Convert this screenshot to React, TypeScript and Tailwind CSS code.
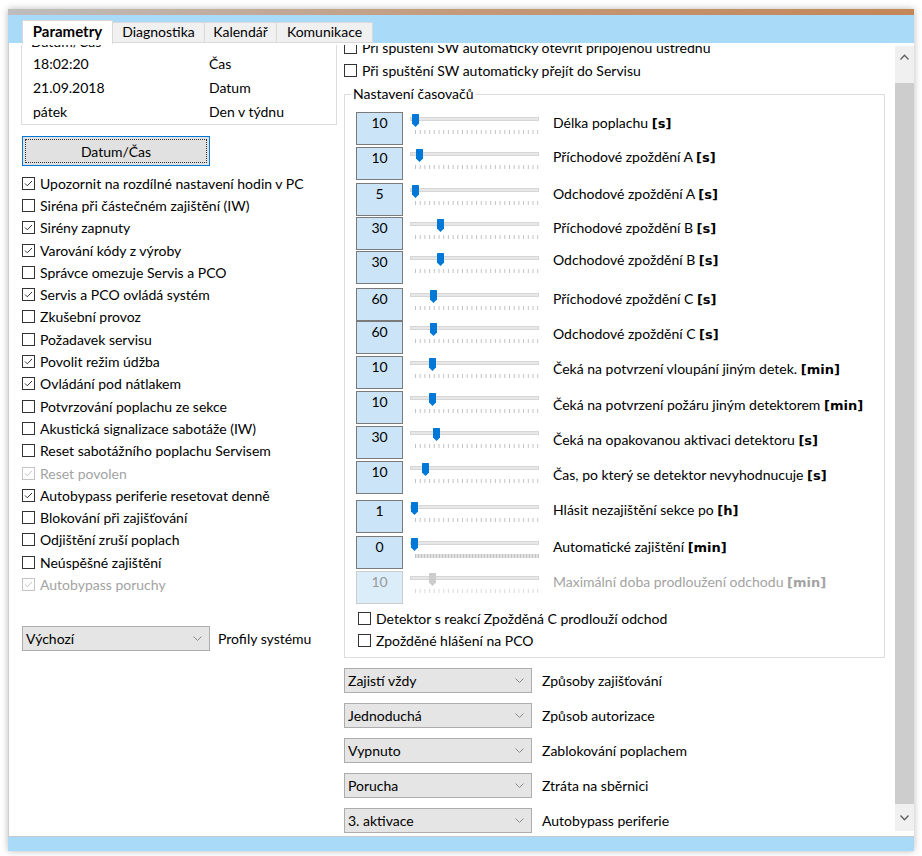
import React from "react";

type Opt = { label: string; checked?: boolean; disabled?: boolean };

const leftChecks: Opt[] = [
  { label: "Upozornit na rozdílné nastavení hodin v PC", checked: true },
  { label: "Siréna při částečném zajištění (IW)" },
  { label: "Sirény zapnuty", checked: true },
  { label: "Varování kódy z výroby", checked: true },
  { label: "Správce omezuje Servis a PCO" },
  { label: "Servis a PCO ovládá systém", checked: true },
  { label: "Zkušební provoz" },
  { label: "Požadavek servisu" },
  { label: "Povolit režim údžba", checked: true },
  { label: "Ovládání pod nátlakem", checked: true },
  { label: "Potvrzování poplachu ze sekce" },
  { label: "Akustická signalizace sabotáže (IW)" },
  { label: "Reset sabotážního poplachu Servisem" },
  { label: "Reset povolen", checked: true, disabled: true },
  { label: "Autobypass periferie resetovat denně", checked: true },
  { label: "Blokování při zajišťování" },
  { label: "Odjištění zruší poplach" },
  { label: "Neúspěšné zajištění" },
  { label: "Autobypass poruchy", checked: true, disabled: true },
];

type Timer = {
  value: string;
  label: string;
  unit: string;
  pos: number;
  h: string;
  lt: string;
  dense?: boolean;
  disabled?: boolean;
};

// h = row height, lt = label offset in the row
const timers: Timer[] = [
  { value: "10", label: "Délka poplachu", unit: "[s]", pos: 2, h: "h-[35px]", lt: "mt-[1px]" },
  { value: "10", label: "Příchodové zpoždění A", unit: "[s]", pos: 6, h: "h-[36px]", lt: "mt-0" },
  { value: "5", label: "Odchodové zpoždění A", unit: "[s]", pos: 2, h: "h-[34px]", lt: "mt-[1px]" },
  { value: "30", label: "Příchodové zpoždění B", unit: "[s]", pos: 27, h: "h-[34px]", lt: "mt-[1px]" },
  { value: "30", label: "Odchodové zpoždění B", unit: "[s]", pos: 27, h: "h-[37px]", lt: "-mt-[1px]" },
  { value: "60", label: "Příchodové zpoždění C", unit: "[s]", pos: 20, h: "h-[33px]", lt: "mt-[1px]" },
  { value: "60", label: "Odchodové zpoždění C", unit: "[s]", pos: 20, h: "h-[35px]", lt: "mt-[3px]" },
  { value: "10", label: "Čeká na potvrzení vloupání jiným detek.", unit: "[min]", pos: 19, h: "h-[35px]", lt: "mt-[3px]" },
  { value: "10", label: "Čeká na potvrzení požáru jiným detektorem", unit: "[min]", pos: 19, h: "h-[35px]", lt: "mt-[4px]" },
  { value: "30", label: "Čeká na opakovanou aktivaci detektoru", unit: "[s]", pos: 23, h: "h-[35px]", lt: "mt-[4px]" },
  { value: "10", label: "Čas, po který se detektor nevyhodnucuje", unit: "[s]", pos: 12, h: "h-[39px]", lt: "mt-[4px]" },
  { value: "1", label: "Hlásit nezajištění sekce po", unit: "[h]", pos: 1, h: "h-[36px]", lt: "mt-0" },
  { value: "0", label: "Automatické zajištění", unit: "[min]", pos: 1, h: "h-[35px]", lt: "mt-[1px]", dense: true },
  { value: "10", label: "Maximální doba prodloužení odchodu", unit: "[min]", pos: 19, h: "h-[33px]", lt: "mt-[1px]", disabled: true },
];

const selects = [
  { value: "Zajistí vždy", label: "Způsoby zajišťování" },
  { value: "Jednoduchá", label: "Způsob autorizace" },
  { value: "Vypnuto", label: "Zablokování poplachem" },
  { value: "Porucha", label: "Ztráta na sběrnici" },
  { value: "3. aktivace", label: "Autobypass periferie" },
];

function CheckBox({ label, checked, disabled, h = "h-[22.3px]" }: Opt & { h?: string }) {
  const c = disabled ? "#c4c4c4" : "#333333";
  return (
    <div className={`flex items-center ${h}`}>
      <span
        className={`w-[13px] h-[13px] shrink-0 border bg-white flex items-center justify-center ${
          disabled ? "border-[#c4c4c4]" : "border-[#333333]"
        }`}
      >
        {checked && (
          <svg width="11" height="11" viewBox="0 0 11 11">
            <path d="M2 5.5 L4.3 7.8 L9 3" fill="none" stroke={c} strokeWidth="1" />
          </svg>
        )}
      </span>
      <span className={`ml-[5px] whitespace-nowrap ${disabled ? "text-[#a3a3a3]" : "text-black"}`}>{label}</span>
    </div>
  );
}

function Chevron({ up, down }: { up?: boolean; down?: boolean }) {
  if (up)
    return (
      <svg width="9" height="6" viewBox="0 0 9 6">
        <path d="M0.5 5.5 L4.5 1.2 L8.5 5.5" fill="none" stroke="#606060" strokeWidth="1.3" />
      </svg>
    );
  if (down)
    return (
      <svg width="9" height="6" viewBox="0 0 9 6">
        <path d="M0.5 0.5 L4.5 4.8 L8.5 0.5" fill="none" stroke="#606060" strokeWidth="1.3" />
      </svg>
    );
  return (
    <svg width="9" height="5" viewBox="0 0 9 5">
      <path d="M0.5 0.5 L4.5 4.5 L8.5 0.5" fill="none" stroke="#8a8a8a" strokeWidth="1" />
    </svg>
  );
}

function Select({ value, label }: { value: string; label: string }) {
  return (
    <div className="flex items-center h-[25px]">
      <div className="w-[188px] h-[25px] bg-[#e5e5e5] border border-[#adadad] flex items-center justify-between pl-[3px] pr-[7px]">
        <span>{value}</span>
        <Chevron />
      </div>
      <span className="ml-[10px] whitespace-nowrap">{label}</span>
    </div>
  );
}

function Slider({ pos, dense, disabled }: { pos: number; dense?: boolean; disabled?: boolean }) {
  const n = dense ? 83 : 27;
  const step = dense ? 1.5 : 4.7;
  return (
    <div className="relative w-[129px] h-[22px] shrink-0">
      <div className="absolute left-0 right-0 top-[3px] h-[4px] bg-[#e7e7e7] border border-[#d6d6d6]" />
      <svg className="absolute left-0 top-[16px]" width="129" height="5" viewBox="0 0 129 5">
        {Array.from({ length: n }).map((_, i) => (
          <line
            key={i}
            x1={5.5 + i * step}
            x2={5.5 + i * step}
            y1="0"
            y2="4"
            stroke={disabled ? "#d0d0d0" : "#b4b4b4"}
            strokeWidth="0.8"
          />
        ))}
      </svg>
      <svg className="absolute top-0" style={{ left: pos }} width="7" height="13" viewBox="0 0 7 13">
        <path d="M0 0.5 Q0 0 0.5 0 H6.5 Q7 0 7 0.5 V9.5 L3.5 13 L0 9.5 Z" fill={disabled ? "#cccccc" : "#0078d7"} />
      </svg>
    </div>
  );
}

function TimerRow({ t }: { t: Timer }) {
  return (
    <div className={`flex items-start ${t.h}`}>
      <div
        className={`w-[47px] h-[33px] shrink-0 border text-center leading-5 ${
          t.disabled ? "bg-[#dcedfa] border-[#cccccc] text-[#999999]" : "bg-[#cce4f7] border-[#7a7a7a] text-black"
        }`}
      >
        {t.value}
      </div>
      <div className="ml-[7px] mt-[2px]">
        <Slider pos={t.pos} dense={t.dense} disabled={t.disabled} />
      </div>
      <div className={`ml-[14px] ${t.lt} leading-5 whitespace-nowrap ${t.disabled ? "text-[#a3a3a3]" : "text-black"}`}>
        {t.label}{" "}
        <span className="font-['DejaVu_Sans',sans-serif] font-bold text-[13px]">{t.unit}</span>
      </div>
    </div>
  );
}

const tabs = ["Parametry", "Diagnostika", "Kalendář", "Komunikace"];
const tabW = ["w-[91px]", "w-[92px]", "w-[72px]", "w-[96px]"];

export default function App() {
  return (
    <div className="w-[922px] h-[856px] bg-white pt-[9px] pl-[8px] font-['Lato',sans-serif] text-[14px] text-black">
      <div className="w-[906px] h-[842px] flex flex-col bg-white shadow-[0_0_7px_rgba(0,0,0,0.28)]">
        {/* title edge */}
        <div className="h-[6px] bg-gradient-to-r from-[#bdbdbd] via-[#c39a7a] to-[#c38657]" />

        {/* tab strip */}
        <div className="h-[28px] bg-[#a9dbf8] flex items-end pl-[14px]">
          {tabs.map((t, i) =>
            i === 0 ? (
              <div
                key={t}
                className={`${tabW[i]} h-[24px] -mb-px pb-[3px] bg-white border border-b-0 border-[#d9d9d9] flex items-center justify-center font-bold text-[15px] z-10`}
              >
                {t}
              </div>
            ) : (
              <div
                key={t}
                className={`${tabW[i]} h-[21px] pb-[2px] bg-[#f0f0f0] border border-l-0 border-[#d9d9d9] flex items-center justify-center`}
              >
                {t}
              </div>
            )
          )}
        </div>

        {/* body */}
        <div className="h-[793px] flex border-l border-[#cfcfcf] pt-[2px]">
          <div className="flex-1 overflow-hidden">
            <div className="-mt-[15px] flex">
              {/* left column */}
              <div className="ml-[12px] w-[316px] flex flex-col">
                <div className="relative mt-[12px] h-[83px] border border-[#dcdcdc] pt-[8px] pl-[11px]">
                  <span className="absolute -top-[11px] left-[8px] px-[1px] bg-white leading-5">Datum/Čas</span>
                  {[
                    ["18:02:20", "Čas"],
                    ["21.09.2018", "Datum"],
                    ["pátek", "Den v týdnu"],
                  ].map(([a, b]) => (
                    <div key={a} className="flex items-center h-6">
                      <span className="w-[176px]">{a}</span>
                      <span>{b}</span>
                    </div>
                  ))}
                </div>

                <div className="mt-[11px] ml-[1px] w-[188px] h-[30px] bg-[#e1e1e1] border border-[#0078d7] p-[2px]">
                  <div className="w-full h-full border border-dotted border-[#333333] flex items-center justify-center">
                    Datum/Čas
                  </div>
                </div>

                <div className="mt-[6px] ml-[1px] flex flex-col">
                  {leftChecks.map((c) => (
                    <CheckBox key={c.label} {...c} />
                  ))}
                </div>

                <div className="mt-[30px] ml-[1px] flex items-center h-[25px]">
                  <div className="w-[188px] h-[25px] bg-[#e5e5e5] border border-[#adadad] flex items-center justify-between pl-[3px] pr-[7px]">
                    <span>Výchozí</span>
                    <Chevron />
                  </div>
                  <span className="ml-[8px] whitespace-nowrap">Profily systému</span>
                </div>
              </div>

              {/* right column */}
              <div className="ml-[7px] w-[541px] flex flex-col pt-[6px]">
                <CheckBox h="h-[23px]" label="Při spuštění SW automaticky otevřít připojenou ústřednu" />
                <CheckBox h="h-[23px]" label="Při spuštění SW automaticky přejít do Servisu" />

                <div className="relative mt-[12px] border border-[#dcdcdc] pl-[11px] pt-[17px] pb-[6px]">
                  <span className="absolute -top-[11px] left-[6px] px-[2px] bg-white leading-5">Nastavení časovačů</span>
                  {timers.map((t) => (
                    <TimerRow key={t.label} t={t} />
                  ))}
                  <div className="mt-[3px] ml-[2px]">
                    <CheckBox h="h-[22px]" label="Detektor s reakcí Zpožděná C prodlouží odchod" />
                    <CheckBox h="h-[22px]" label="Zpožděné hlášení na PCO" />
                  </div>
                </div>

                <div className="mt-[10px] flex flex-col gap-[10px]">
                  {selects.map((s) => (
                    <Select key={s.label} {...s} />
                  ))}
                </div>
              </div>
            </div>
          </div>

          {/* scrollbar */}
          <div className="w-[19px] mt-[1px] mb-[5px] bg-[#f0f0f0] flex flex-col">
            <div className="h-[37px] flex items-start justify-center pt-[8px]">
              <Chevron up />
            </div>
            <div className="flex-1 bg-[#cdcdcd]" />
            <div className="h-[27px] flex items-center justify-center">
              <Chevron down />
            </div>
          </div>
        </div>

        {/* bottom strip */}
        <div className="flex-1 border-t border-[#c8c8c8] bg-[#a9dbf8]" />
      </div>
    </div>
  );
}
